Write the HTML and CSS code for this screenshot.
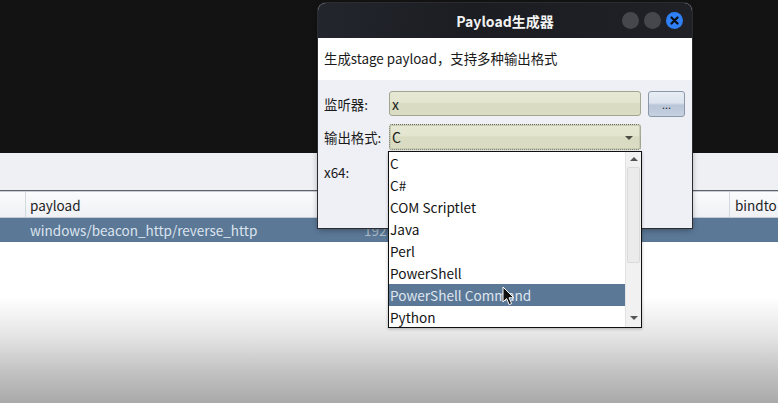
FILE: index.html
```html
<!DOCTYPE html>
<html lang="zh-CN">
<head>
<meta charset="utf-8">
<title>Payload生成器</title>
<link rel="stylesheet" href="styles.css">
</head>
<body>
<div class="screen">
  <div class="desktop"></div>
  <div class="app">
    <div class="toolbar"></div>
    <div class="sep"></div>
    <div class="header">
      <div class="hcell first"></div>
      <div class="hcell grow">payload</div>
      <div class="hcell last">bindto</div>
    </div>
    <div class="row selected">
      <div class="rcell first"></div>
      <div class="rcell name">windows/beacon_http/reverse_http</div>
      <div class="rcell host">192</div>
    </div>
    <div class="rest"></div>
  </div>

  <div class="dialog">
    <div class="titlebar">
      <div class="title">Payload生成器</div>
      <div class="wbtns">
        <span class="wbtn"></span>
        <span class="wbtn"></span>
        <span class="wbtn close">
          <svg width="9" height="9" viewBox="0 0 9 9"><path d="M1.5 1.5 L7.5 7.5 M7.5 1.5 L1.5 7.5" stroke="#0b0d12" stroke-width="2.2" stroke-linecap="round"/></svg>
        </span>
      </div>
    </div>
    <div class="desc">生成stage payload，支持多种输出格式</div>
    <div class="form">
      <div class="frow">
        <label class="flabel">监听器:</label>
        <div class="field">x</div>
        <button class="dots">...</button>
      </div>
      <div class="frow">
        <label class="flabel">输出格式:</label>
        <div class="field combo">C<span class="arrow"></span></div>
      </div>
      <div class="frow">
        <label class="flabel">x64:</label>
      </div>
    </div>
  </div>

  <div class="popup">
    <ul class="items">
      <li>C</li>
      <li>C#</li>
      <li>COM Scriptlet</li>
      <li>Java</li>
      <li>Perl</li>
      <li>PowerShell</li>
      <li class="hl">PowerShell Command</li>
      <li>Python</li>
    </ul>
    <div class="sbar">
      <span class="sarrow up"></span>
      <span class="thumb"></span>
      <span class="sarrow down"></span>
    </div>
  </div>

  <svg class="cursor" width="13" height="20" viewBox="0 0 13 20">
    <path d="M1 1 L1 16 L4.6 12.6 L7.2 18.6 L9.6 17.6 L7 11.8 L11.8 11.8 Z" fill="#111" stroke="#fff" stroke-width="1"/>
  </svg>
</div>
</body>
</html>
```

FILE: styles.css
```css
* { box-sizing: border-box; margin: 0; padding: 0; }
html, body { width: 778px; height: 403px; overflow: hidden; }
body {
  font-family: "Noto Sans CJK SC", "Noto Sans", sans-serif;
  font-size: 13px;
  color: #1a1a1a;
  background: #131313;
}
.screen { position: relative; width: 778px; height: 403px; display: flex; flex-direction: column; }
.desktop { height: 153px; background: #131313; }
.app { flex: 1; display: flex; flex-direction: column; background: #fff; }
.toolbar { height: 37px; background: #eef0f4; }
.sep { height: 2px; border-top: 1px solid #5e626a; background: #c9cdd4; }
.header {
  height: 26px; display: flex;
  background: linear-gradient(#fbfcfd, #eef0f4);
  border-bottom: 1px solid #c3cad4;
}
.hcell { display: flex; align-items: center; padding-left: 4px; padding-top: 1px; font-size: 13.5px; color: #1e1e1e; }
.hcell.first { width: 26px; border-right: 1px solid #d3d7de; }
.hcell.grow { flex: 1; }
.hcell.last { width: 49px; border-left: 1px solid #d3d7de; padding-left: 5px; }
.row { height: 24px; display: flex; align-items: center; }
.row.selected { background: #5b7897; color: #dce4ee; font-size: 13.5px; }
.rcell.first { width: 30px; }
.rcell.name { width: 334px; }
.rcell.host { color: #aebdcc; }
.rest {
  flex: 1;
  background: linear-gradient(#ffffff 0px, #ffffff 55px, #e4e4e4 95px, #c2c2c2 130px, #a9a9a9 161px);
}

.dialog {
  position: absolute; left: 318px; top: 3px; width: 374px; height: 225px;
  display: flex; flex-direction: column;
  border-radius: 8px 8px 0 0;
  box-shadow: 0 0 0 1px #2a2c30, 0 2px 6px rgba(0,0,0,0.35);
  background: #eef0f5;
}
.titlebar {
  height: 35px; position: relative;
  background: linear-gradient(100deg, #23262d 0%, #1b1d22 40%, #1f2127 100%);
  border-radius: 8px 8px 0 0;
  display: flex; align-items: center; justify-content: center;
}
.title { color: #f2f2f2; font-weight: 700; font-size: 14px; }
.wbtns { position: absolute; right: 9px; top: 9px; display: flex; gap: 5px; }
.wbtn { width: 17px; height: 17px; border-radius: 50%; background: #45474d; display: flex; align-items: center; justify-content: center; }
.wbtn.close { background: #2f80f5; }
.desc { height: 42px; background: #fff; display: flex; align-items: center; padding-left: 6px; padding-bottom: 3px; font-size: 13.4px; }
.form { flex: 1; padding: 11px 7px 0 6px; display: flex; flex-direction: column; gap: 8px; }
.frow { display: flex; align-items: center; height: 25px; }
.frow:nth-child(2) { height: 26px; }
.frow:nth-child(3) { margin-top: 1px; }
.flabel { width: 65px; font-size: 13.4px; color: #1a1a1a; }
.field {
  width: 252px; height: 25px;
  border: 1px solid #a3a68e; border-radius: 3px;
  background: linear-gradient(#e6e8d4 0%, #e3e5cf 45%, #d9dcc1 50%, #dadcc3 100%);
  display: flex; align-items: center; padding-left: 2px; font-size: 14px;
  position: relative;
}
.combo { height: 26px; border: 1px dotted #6b6e5c; box-shadow: inset 0 0 0 1px #c9cbb3; }
.arrow {
  position: absolute; right: 7px; top: 11px;
  border-left: 4px solid transparent; border-right: 4px solid transparent; border-top: 4px solid #4b4d45;
}
.dots {
  margin-left: 7px; width: 37px; height: 26px;
  border: 1px solid #8b98aa; border-radius: 3px;
  background: linear-gradient(#e8edf4 0%, #dde4ee 45%, #b9c6d8 55%, #c6d1e0 100%);
  font-family: inherit; font-size: 11px; color: #333; line-height: 1; padding-top: 2px;
}

.popup {
  position: absolute; left: 388px; top: 151px; width: 254px; height: 177px;
  border: 1px solid #101010; background: #fff;
  display: flex; overflow: hidden;
  box-shadow: 0 1px 3px rgba(0,0,0,0.25);
}
.items { list-style: none; flex: 1; }
.items li { height: 22px; display: flex; align-items: center; padding-left: 1px; font-size: 13.6px; color: #141414; }
.items li.hl { background: #5b7897; color: #dfe6ef; }
.sbar {
  width: 16px; background: #f1f1f1; border-left: 1px solid #e2e2e2;
  display: flex; flex-direction: column; align-items: center; padding: 3px 1px;
}
.sarrow { width: 0; height: 0; border-left: 4px solid transparent; border-right: 4px solid transparent; }
.sarrow.up { border-bottom: 4px solid #555; margin-top: 2px; }
.sarrow.down { border-top: 4px solid #555; margin-top: auto; margin-bottom: 4px; }
.thumb { width: 13px; height: 96px; margin-top: 6px; background: #ebebeb; border: 1px solid #dadada; border-radius: 2px; }
.cursor { position: absolute; left: 502px; top: 286px; }
```
